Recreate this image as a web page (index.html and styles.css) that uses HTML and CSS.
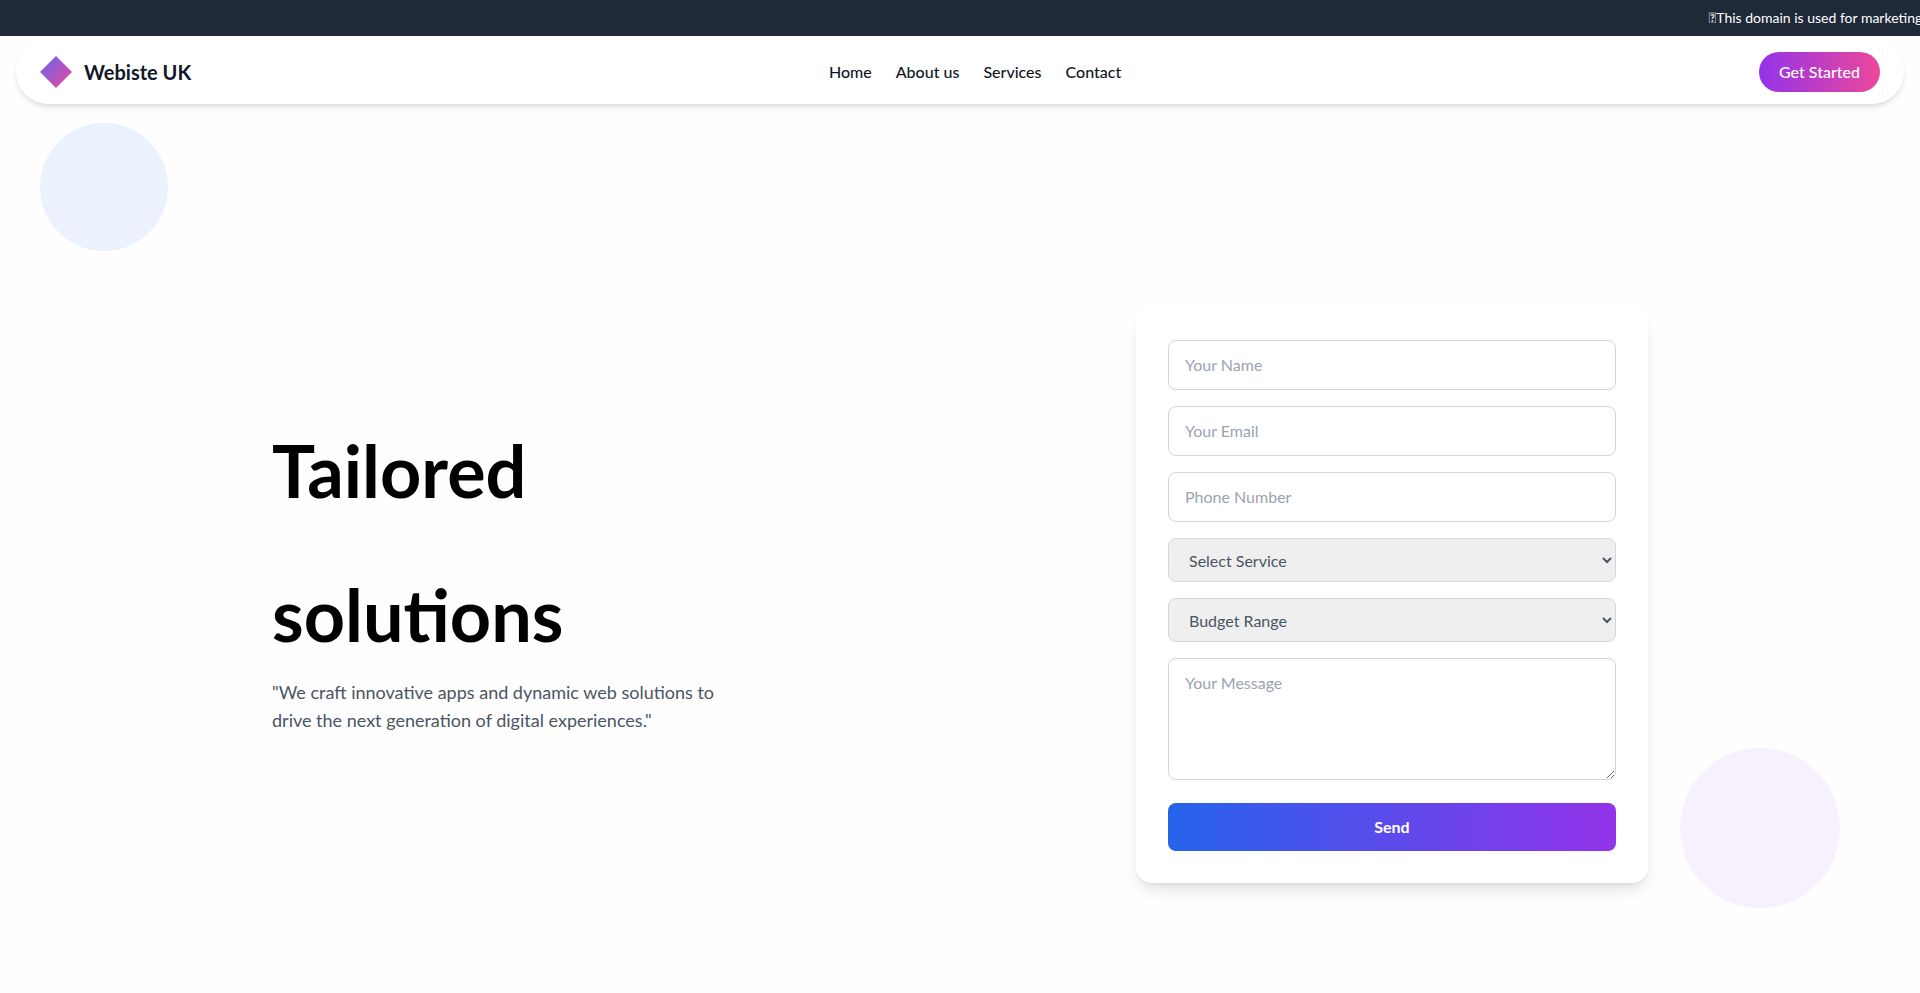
FILE: index.html
```html
<!DOCTYPE html>
<html lang="en">
<head>
    <meta charset="UTF-8">
    <meta name="viewport" content="width=device-width, initial-scale=1.0">
    <title>Webiste UK</title>
    <link rel="stylesheet" href="styles.css">
</head>
<body>
    <div class="banner">
        <p class="banner-text">&#xE000;This domain is used for marketing</p>
    </div>

    <header class="navbar">
        <a href="#" class="brand">
            <svg class="logo" viewBox="0 0 32 32" aria-hidden="true">
                <defs>
                    <linearGradient id="logo-fill" x1="0" y1="0" x2="1" y2="1">
                        <stop offset="0" stop-color="#6366f1"/>
                        <stop offset="1" stop-color="#ec4899"/>
                    </linearGradient>
                </defs>
                <path d="M16 0L32 16L16 32L0 16Z" fill="url(#logo-fill)"/>
            </svg>
            <span>Webiste UK</span>
        </a>
        <nav class="nav-links">
            <a href="#home">Home</a>
            <a href="#about">About us</a>
            <a href="#services">Services</a>
            <a href="#contact">Contact</a>
        </nav>
        <button type="button" class="btn-start">Get Started</button>
    </header>

    <main class="hero" id="home">
        <div class="circle circle-blue"></div>
        <div class="circle circle-purple"></div>

        <div class="hero-inner">
            <div class="hero-text">
                <h1>Tailored<br><br>solutions</h1>
                <p>"We craft innovative apps and dynamic web solutions to drive the next generation of digital experiences."</p>
            </div>

            <form class="contact-form" id="contact">
                <input type="text" name="name" placeholder="Your Name" aria-label="Your Name">
                <input type="email" name="email" placeholder="Your Email" aria-label="Your Email">
                <input type="tel" name="phone" placeholder="Phone Number" aria-label="Phone Number">
                <select name="service" aria-label="Select Service">
                    <option>Select Service</option>
                </select>
                <select name="budget" aria-label="Budget Range">
                    <option>Budget Range</option>
                </select>
                <textarea name="message" rows="4" placeholder="Your Message" aria-label="Your Message"></textarea>
                <button type="submit" class="btn-send">Send</button>
            </form>
        </div>
    </main>
</body>
</html>
```

FILE: styles.css
```css
* {
    box-sizing: border-box;
    margin: 0;
    padding: 0;
}

body {
    font-family: Lato, sans-serif;
    font-size: 16px;
    line-height: 24px;
    color: #111827;
    background-color: #fefefe;
    min-height: 100vh;
    display: flex;
    flex-direction: column;
    overflow-x: hidden;
}

a {
    color: inherit;
    text-decoration: none;
}

button,
input,
select,
textarea {
    font: inherit;
}

/* top banner */
.banner {
    background-color: #1f2937;
    color: #fff;
    padding: 8px 0;
    overflow: hidden;
}

.banner-text {
    padding-left: 89%;
    font-size: 14px;
    line-height: 20px;
    white-space: nowrap;
}

/* navbar */
.navbar {
    display: flex;
    justify-content: space-between;
    align-items: center;
    margin: 4px 16px 0;
    padding: 12px 24px;
    border-radius: 32px;
    background-color: #fff;
    box-shadow: 0 4px 6px -1px rgba(0, 0, 0, 0.1), 0 2px 4px -2px rgba(0, 0, 0, 0.1);
}

.brand {
    display: flex;
    align-items: center;
    gap: 12px;
    font-size: 20px;
    font-weight: bold;
}

.logo {
    width: 32px;
    height: 32px;
}

.nav-links {
    display: flex;
    gap: 24px;
    font-weight: 500;
}

.btn-start {
    padding: 8px 20px;
    border: none;
    border-radius: 20px;
    color: #fff;
    font-weight: 500;
    background: linear-gradient(to right, #9333ea, #ec4899);
    cursor: pointer;
}

/* hero */
.hero {
    position: relative;
    flex: 1;
    display: flex;
    justify-content: center;
    align-items: center;
    padding: 192px 48px 98px;
}

.hero-inner {
    display: flex;
    justify-content: space-between;
    align-items: center;
    width: 100%;
    max-width: 1376px;
}

.hero-text {
    max-width: 480px;
}

.hero-text h1 {
    margin-bottom: 28px;
    font-size: 72px;
    line-height: 72px;
    color: #000;
}

.hero-text p {
    margin-bottom: 24px;
    font-size: 18px;
    line-height: 28px;
    color: #4b5563;
}

.circle {
    position: absolute;
    border-radius: 50%;
}

.circle-blue {
    top: 19px;
    left: 40px;
    width: 128px;
    height: 128px;
    background-color: #ebf2fe;
}

.circle-purple {
    right: 80px;
    bottom: 85px;
    width: 160px;
    height: 160px;
    background-color: #f7f1fe;
}

/* form */
.contact-form {
    display: flex;
    flex-direction: column;
    gap: 16px;
    width: 100%;
    max-width: 512px;
    padding: 32px;
    border-radius: 16px;
    background-color: #fff;
    box-shadow: 0 10px 15px -3px rgba(0, 0, 0, 0.1), 0 4px 6px -4px rgba(0, 0, 0, 0.1);
}

.contact-form input,
.contact-form textarea,
.contact-form select {
    width: 100%;
    border: 1px solid #d1d5db;
    border-radius: 8px;
}

.contact-form input,
.contact-form textarea {
    padding: 12px 16px;
    background-color: #fff;
}

.contact-form ::placeholder {
    color: #9ca3af;
}

.contact-form select {
    height: 44px;
    padding: 0 16px;
    color: #4b5563;
    background-color: #efefef;
}

.contact-form textarea {
    resize: vertical;
}

.btn-send {
    margin-top: 7px;
    padding: 12px;
    border: none;
    border-radius: 8px;
    color: #fff;
    font-weight: bold;
    background: linear-gradient(to right, #2563eb, #9333ea);
    cursor: pointer;
}
```
